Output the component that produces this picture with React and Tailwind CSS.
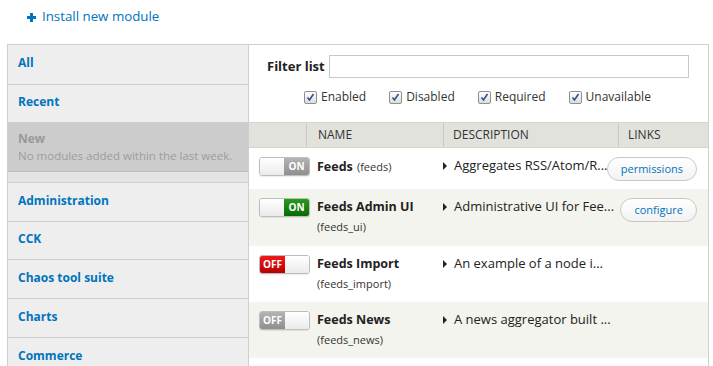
import React from 'react';

const font = { fontFamily: '"Open Sans", "DejaVu Sans", sans-serif' };

function Toggle({ on, tone }) {
  const colors = {
    green: 'bg-gradient-to-b from-[#2a9a1e] to-[#066a06]',
    red: 'bg-gradient-to-b from-[#ee1a1a] to-[#b70000]',
    grey: 'bg-gradient-to-b from-[#b4b4b4] to-[#8e8e8e]',
  };
  const label = (
    <div className={`w-[25px] h-full flex items-center justify-center text-white font-bold text-[10px] ${colors[tone]}`}>
      {on ? 'ON' : 'OFF'}
    </div>
  );
  const blank = <div className="flex-1 h-full bg-gradient-to-b from-white to-[#ebebeb]" />;
  return (
    <div className="w-[51px] h-[19px] rounded-[3px] border border-[#bdbdbd] overflow-hidden flex shadow-[0_1px_1px_rgba(0,0,0,0.08)]">
      {on ? blank : label}
      {on ? label : blank}
    </div>
  );
}

function Check({ label }) {
  return (
    <label className="flex items-center text-[12px] text-[#333]">
      <span className="w-[13px] h-[13px] border border-[#8f8f8f] rounded-[2px] bg-gradient-to-b from-white to-[#dcdcdc] flex items-center justify-center mr-[4px]">
        <svg width="9" height="9" viewBox="0 0 9 9">
          <path d="M1.5 4.5 L3.5 7 L7.5 1" fill="none" stroke="#2f4f8f" strokeWidth="1.6" />
        </svg>
      </span>
      {label}
    </label>
  );
}

function SideItem({ label, h }) {
  return (
    <div className={`${h} flex items-center pl-[10px] pb-[3px] border-b border-[#cfcfcf] text-[12px] font-bold text-[#0074bd]`}>
      {label}
    </div>
  );
}

const rows = [
  { toggle: [true, 'grey'], name: 'Feeds', machine: 'feeds', inline: true, desc: 'Aggregates RSS/Atom/R...', link: 'permissions', bg: 'bg-white', h: 'h-[41px]' },
  { toggle: [true, 'green'], name: 'Feeds Admin UI', machine: 'feeds_ui', desc: 'Administrative UI for Fee...', link: 'configure', bg: 'bg-[#f3f4ee]', h: 'h-[57px]' },
  { toggle: [false, 'red'], name: 'Feeds Import', machine: 'feeds_import', desc: 'An example of a node i...', bg: 'bg-white', h: 'h-[56px]' },
  { toggle: [false, 'grey'], name: 'Feeds News', machine: 'feeds_news', desc: 'A news aggregator built ...', bg: 'bg-[#f3f4ee]', h: 'h-[56px]' },
];

export default function App() {
  return (
    <div className="w-[713px] h-[366px] overflow-hidden bg-white text-[#333]" style={font}>
      {/* action link */}
      <div className="h-[44px] pl-[27px] pt-[7px] flex items-start">
        <a className="flex items-center h-[20px] text-[13.3px] text-[#0074bd]">
          <svg width="9" height="9" viewBox="0 0 9 9" className="mr-[6px]">
            <rect x="3" y="0" width="3" height="9" fill="#0074bd" />
            <rect x="0" y="3" width="9" height="3" fill="#0074bd" />
          </svg>
          Install new module
        </a>
      </div>

      <div className="flex ml-[7px] mr-[4px]">
        {/* Sidebar */}
        <aside className="w-[241px] shrink-0 bg-[#eeeeee] border-l border-t border-[#cfcfcf]">
          <SideItem label="All" h="h-[40px]" />
          <SideItem label="Recent" h="h-[38px]" />
          <div className="h-[49px] bg-[#cccccc] border-b border-[#bdbdbd] pl-[10px] pt-[8px]">
            <div className="text-[12px] font-bold text-[#999] leading-[16px]">New</div>
            <div className="text-[11.5px] text-[#9d9d9d] leading-[18px]">No modules added within the last week.</div>
          </div>
          <div className="h-[11px] bg-[#e4e4e4] border-b border-[#cfcfcf]" />
          <SideItem label="Administration" h="h-[39px]" />
          <SideItem label="CCK" h="h-[38px]" />
          <SideItem label="Chaos tool suite" h="h-[39px]" />
          <SideItem label="Charts" h="h-[39px]" />
          <SideItem label="Commerce" h="h-[39px]" />
        </aside>

        {/* Main */}
        <main className="flex-1 border-l border-t border-r border-[#cfcfcf] bg-white min-h-[330px]">
          <div className="pl-[18px] pt-[10px] flex items-center">
            <span className="text-[13px] font-bold text-[#222] mr-[4px]">Filter list</span>
            <div className="w-[360px] h-[23px] border border-[#c8c8c8] bg-white" />
          </div>
          <div className="pl-[55px] pt-[10px] h-[44px] flex items-start gap-[23px]">
            <Check label="Enabled" />
            <Check label="Disabled" />
            <Check label="Required" />
            <Check label="Unavailable" />
          </div>

          {/* Table */}
          <div className="grid grid-cols-[57px_137px_175px_89px] h-[26px] bg-[#e1e2dc] border-t border-[#d6d6d0] border-b border-[#bfbfba] text-[12px] text-[#333]">
            <div />
            <div className="border-l border-[#c9c9c3] pl-[11px] flex items-center">NAME</div>
            <div className="border-l border-[#c9c9c3] pl-[9px] flex items-center">DESCRIPTION</div>
            <div className="border-l border-[#c9c9c3] pl-[9px] flex items-center">LINKS</div>
          </div>
          {rows.map((r) => (
            <div key={r.name} className={`grid grid-cols-[57px_137px_175px_89px] ${r.h} ${r.bg} pt-[9px]`}>
              <div className="pl-[10px]">
                <Toggle on={r.toggle[0]} tone={r.toggle[1]} />
              </div>
              <div className="pl-[11px] leading-[19px]">
                {r.inline ? (
                  <div className="-mt-[1px]">
                    <span className="text-[12.5px] font-bold text-[#222]">{r.name}</span>{' '}
                    <span className="text-[11px]">({r.machine})</span>
                  </div>
                ) : (
                  <>
                    <div className="-mt-[1px] text-[12.5px] font-bold text-[#222]">{r.name}</div>
                    <div className="text-[11px] mt-[1px]">({r.machine})</div>
                  </>
                )}
              </div>
              <div className="flex items-start -mt-[1px] leading-[19px] whitespace-nowrap">
                <svg width="5" height="8" viewBox="0 0 5 8" className="mt-[6px] mr-[6px]">
                  <path d="M0 0 L4 4 L0 8 Z" fill="#222" />
                </svg>
                <span className="text-[13px] text-[#222]">{r.desc}</span>
              </div>
              <div className="flex justify-end pr-[10px]">
                {r.link && (
                  <span className="shrink-0 h-[24px] px-[13px] flex items-center rounded-full border border-[#c8c8c8] bg-gradient-to-b from-white to-[#f2f2f2] text-[11px] text-[#0074bd]">
                    {r.link}
                  </span>
                )}
              </div>
            </div>
          ))}
        </main>
      </div>
    </div>
  );
}
